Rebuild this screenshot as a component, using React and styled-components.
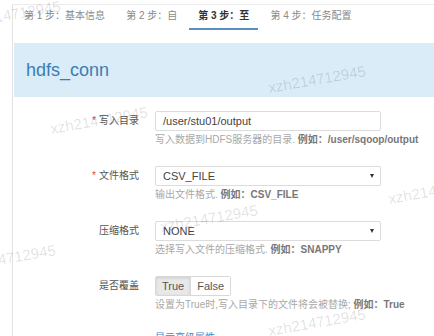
import React from "react";
import styled, { createGlobalStyle } from "styled-components";

const Global = createGlobalStyle`
  html, body { margin: 0; padding: 0; background: #fff; }
  body { font-family: "Liberation Sans", "Noto Sans CJK SC", Arial, sans-serif; }
  * { box-sizing: border-box; }
`;

const Page = styled.div`
  position: relative;
  width: 434px;
  height: 336px;
  overflow: hidden;
  padding: 4px 0 0 12px;
`;

const Panel = styled.div`
  border-left: 1px solid #e2e2e2;
  border-top: 1px solid #ececec;
  height: 340px;
`;

const TabList = styled.div`
  display: flex;
  padding-left: 2px;
  margin-bottom: 13px;
`;

const Tab = styled.div`
  padding: 5px 9px 6px;
  font-size: 10px;
  line-height: 12px;
  white-space: nowrap;
  color: ${(p) => (p.$active ? "#333" : "#8a8a8a")};
  font-weight: ${(p) => (p.$active ? 700 : 400)};
  border-bottom: 2px solid ${(p) => (p.$active ? "#5b8fc0" : "transparent")};
  margin-right: 3px;
`;

const Header = styled.div`
  margin-left: 1px;
  height: 54px;
  background: #d9ecf8;
  display: flex;
  align-items: center;
  padding-left: 12px;
  font-size: 18px;
  color: #3c7db4;
  font-family: "Liberation Sans", Arial, sans-serif;
`;

const Form = styled.div`
  padding-top: 14px;
`;

const Row = styled.div`
  display: flex;
  align-items: flex-start;
  margin-bottom: 19px;
`;

const Label = styled.div`
  width: 126px;
  margin-right: 16px;
  text-align: right;
  font-size: 10px;
  line-height: 20px;
  color: #555;
  white-space: nowrap;
`;

const Req = styled.span`
  color: #e0483e;
  margin-right: 3px;
`;

const Control = styled.div`
  width: 226px;
`;

const Input = styled.div`
  height: 20px;
  border: 1px solid #dcdcdc;
  border-radius: 2px;
  padding: 0 7px;
  font-size: 11px;
  line-height: 18px;
  color: #444;
  display: flex;
  align-items: center;
  justify-content: space-between;
`;

const Caret = styled.span`
  width: 0;
  height: 0;
  border-left: 2.5px solid transparent;
  border-right: 2.5px solid transparent;
  border-top: 4px solid #333;
  margin-right: -1px;
`;

const Help = styled.div`
  margin-top: 2px;
  font-size: 10px;
  line-height: 14px;
  color: #a8a8a8;
  white-space: nowrap;
`;

const Example = styled.b`
  color: #777;
  font-weight: 700;
`;

const BtnGroup = styled.div`
  display: inline-flex;
  border: 1px solid #d8d8d8;
  border-radius: 2px;
  height: 20px;
`;

const Btn = styled.div`
  padding: 0 6px;
  font-size: 11px;
  line-height: 18px;
  color: #555;
  background: ${(p) => (p.$on ? "#e8e8e8" : "#fff")};
  box-shadow: ${(p) => (p.$on ? "inset 0 1px 3px rgba(0,0,0,0.12)" : "none")};
  & + & { border-left: 1px solid #d8d8d8; }
`;

const LinkRow = styled.div`
  padding-left: 142px;
  margin-top: -3px;
  font-size: 10px;
  line-height: 20px;
  color: #4a86c5;
`;

const Mark = styled.div`
  position: absolute;
  left: ${(p) => p.$x}px;
  top: ${(p) => p.$y}px;
  font-size: 15px;
  color: rgba(0, 0, 0, 0.13);
  transform: rotate(-10deg);
  transform-origin: left bottom;
  white-space: nowrap;
  pointer-events: none;
  font-family: "Liberation Sans", Arial, sans-serif;
`;

const marks = [
  [-35, 14],
  [270, 79],
  [52, 120],
  [390, 190],
  [162, 218],
  [-40, 258],
  [270, 322],
];

export default function App() {
  return (
    <Page>
      <Global />
      <Panel>
        <TabList>
          <Tab>第 1 步：基本信息</Tab>
          <Tab>第 2 步：自</Tab>
          <Tab $active>第 3 步：至</Tab>
          <Tab>第 4 步：任务配置</Tab>
        </TabList>
        <Header>hdfs_conn</Header>
        <Form>
          <Row>
            <Label><Req>*</Req>写入目录</Label>
            <Control>
              <Input>/user/stu01/output</Input>
              <Help>写入数据到HDFS服务器的目录. <Example>例如：/user/sqoop/output</Example></Help>
            </Control>
          </Row>
          <Row>
            <Label><Req>*</Req>文件格式</Label>
            <Control>
              <Input>CSV_FILE<Caret /></Input>
              <Help>输出文件格式. <Example>例如：CSV_FILE</Example></Help>
            </Control>
          </Row>
          <Row>
            <Label>压缩格式</Label>
            <Control>
              <Input>NONE<Caret /></Input>
              <Help>选择写入文件的压缩格式. <Example>例如：SNAPPY</Example></Help>
            </Control>
          </Row>
          <Row>
            <Label>是否覆盖</Label>
            <Control>
              <BtnGroup>
                <Btn $on>True</Btn>
                <Btn>False</Btn>
              </BtnGroup>
              <Help>设置为True时,写入目录下的文件将会被替换; <Example>例如：True</Example></Help>
            </Control>
          </Row>
          <LinkRow>显示高级属性</LinkRow>
        </Form>
      </Panel>
      {marks.map(([x, y], i) => (
        <Mark key={i} $x={x} $y={y}>xzh214712945</Mark>
      ))}
    </Page>
  );
}
